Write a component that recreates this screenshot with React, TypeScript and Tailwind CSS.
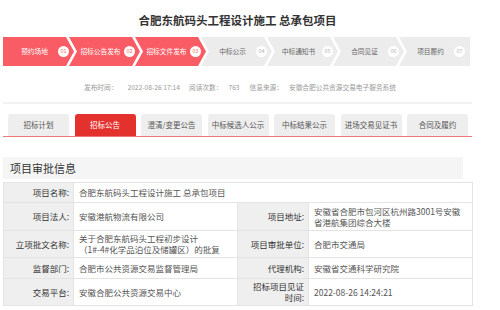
import React from 'react';

const steps = ['预约场地', '招标公告发布', '招标文件发布', '中标公示', '中标通知书', '合同见证', '项目履约'];
const tabs = ['招标计划', '招标公告', '澄清/变更公告', '中标候选人公示', '中标结果公示', '进场交易见证书', '合同及履约'];

const clipFirst = '[clip-path:polygon(0_0,63px_0,71px_50%,63px_100%,0_100%)]';
const clipMid = '[clip-path:polygon(0_0,63px_0,71px_50%,63px_100%,0_100%,8px_50%)]';
const clipLast = '[clip-path:polygon(0_0,100%_0,100%_100%,0_100%,8px_50%)]';

const Label: React.FC<{ children: React.ReactNode }> = ({ children }) => (
	<td className="border border-[#e4e4e4] bg-[#efefef] pr-[4px] pl-[2px] py-[2px] text-right align-middle text-[#333]">
		{children}
	</td>
);

const Value: React.FC<{ children: React.ReactNode; span?: number }> = ({ children, span }) => (
	<td colSpan={span} className="border border-[#e4e4e4] bg-white pl-[5px] pr-[3px] py-[2px] align-middle text-[#555]">
		{children}
	</td>
);

const App: React.FC = () => {
	return (
		<div className="h-[310px] w-[500px] overflow-hidden bg-white [font-family:'Noto_Sans_CJK_SC','Noto_Sans',sans-serif]">
			<div className="ml-[3px] w-[469px]">
				{/* Title */}
				<h1 className="pt-[13px] text-center text-[11.5px] font-bold leading-[14px] text-[#333]">
					合肥东航码头工程设计施工 总承包项目
				</h1>

				{/* Progress steps */}
				<div className="mt-[10px] flex">
					{steps.map((s, i) => {
						const active = i < 3;
						const clip = i === 0 ? clipFirst : i === steps.length - 1 ? clipLast : clipMid;
						return (
							<div
								key={s}
								className={`flex h-[29px] w-[71px] shrink-0 items-center pl-[8px] ${i > 0 ? '-ml-[5px]' : ''} ${clip} ${active ? 'bg-[#f95c64]' : 'bg-[#ececec]'}`}
							>
								<span className={`flex-1 whitespace-nowrap text-center text-[6.7px] leading-none ${active ? 'text-white' : 'text-[#666]'}`}>
									{s}
								</span>
								<span
									className={`flex h-[11px] w-[11px] items-center justify-center rounded-full bg-white text-[5.5px] leading-none ${active ? 'text-[#f5705c]' : 'text-[#b5b5b5]'}`}
								>
									{`0${i + 1}`}
								</span>
								<span className="w-[5px]" />
							</div>
						);
					})}
				</div>

				{/* Meta */}
				<div className="mt-[16px] flex h-[10px] items-center pl-[81px] text-[6.7px] leading-[10px] text-[#999]">
					<span>发布时间：</span>
					<span className="ml-[10px]">2022-08-26 17:14</span>
					<span className="ml-[9px]">阅读次数：</span>
					<span className="ml-[6px]">763</span>
					<span className="ml-[10px]">信息来源：</span>
					<span className="ml-[6px]">安徽合肥公共资源交易电子服务系统</span>
				</div>

				<div className="mt-[10px] h-[2px] bg-[#f1f1f1]" />

				{/* Tabs */}
				<div className="mt-[10px] flex gap-[5.5px] border-b border-[#f07878] pl-[5px]">
					{tabs.map((t, i) => (
						<div
							key={t}
							className={`flex h-[22px] w-[61px] items-center justify-center rounded-t-[3px] text-[7.5px] ${i === 1 ? 'bg-[#e3312d] text-white' : 'bg-[#eeeeee] text-[#555]'}`}
						>
							{t}
						</div>
					))}
				</div>

				{/* Section */}
				<div className="mt-[20px] flex h-[22px] w-[460px] items-center bg-[#f5f5f5] pl-[7px] text-[11px] text-[#333]">
					项目审批信息
				</div>

				<table className="mt-[3px] w-[469px] table-fixed border-collapse text-[8.5px] leading-[11px]">
					<colgroup>
						<col className="w-[70px]" />
						<col className="w-[164px]" />
						<col className="w-[71px]" />
						<col className="w-[164px]" />
					</colgroup>
					<tbody>
						<tr className="h-[20px]">
							<Label>项目名称:</Label>
							<Value span={3}>合肥东航码头工程设计施工 总承包项目</Value>
						</tr>
						<tr className="h-[28px]">
							<Label>项目法人:</Label>
							<Value>安徽港航物流有限公司</Value>
							<Label>项目地址:</Label>
							<Value>
								安徽省合肥市包河区杭州路3001号安徽
								<br />
								省港航集团综合大楼
							</Value>
						</tr>
						<tr className="h-[27px]">
							<Label>立项批文名称:</Label>
							<Value>
								关于合肥东航码头工程初步设计
								<br />
								（1#-4#化学品泊位及储罐区）的批复
							</Value>
							<Label>项目审批单位:</Label>
							<Value>合肥市交通局</Value>
						</tr>
						<tr className="h-[21px]">
							<Label>监督部门:</Label>
							<Value>合肥市公共资源交易监督管理局</Value>
							<Label>代理机构:</Label>
							<Value>安徽省交通科学研究院</Value>
						</tr>
						<tr className="h-[27px]">
							<Label>交易平台:</Label>
							<Value>安徽合肥公共资源交易中心</Value>
							<Label>
								招标项目见证
								<br />
								时间:
							</Label>
							<Value>2022-08-26 14:24:21</Value>
						</tr>
					</tbody>
				</table>
			</div>
		</div>
	);
};

export default App;
